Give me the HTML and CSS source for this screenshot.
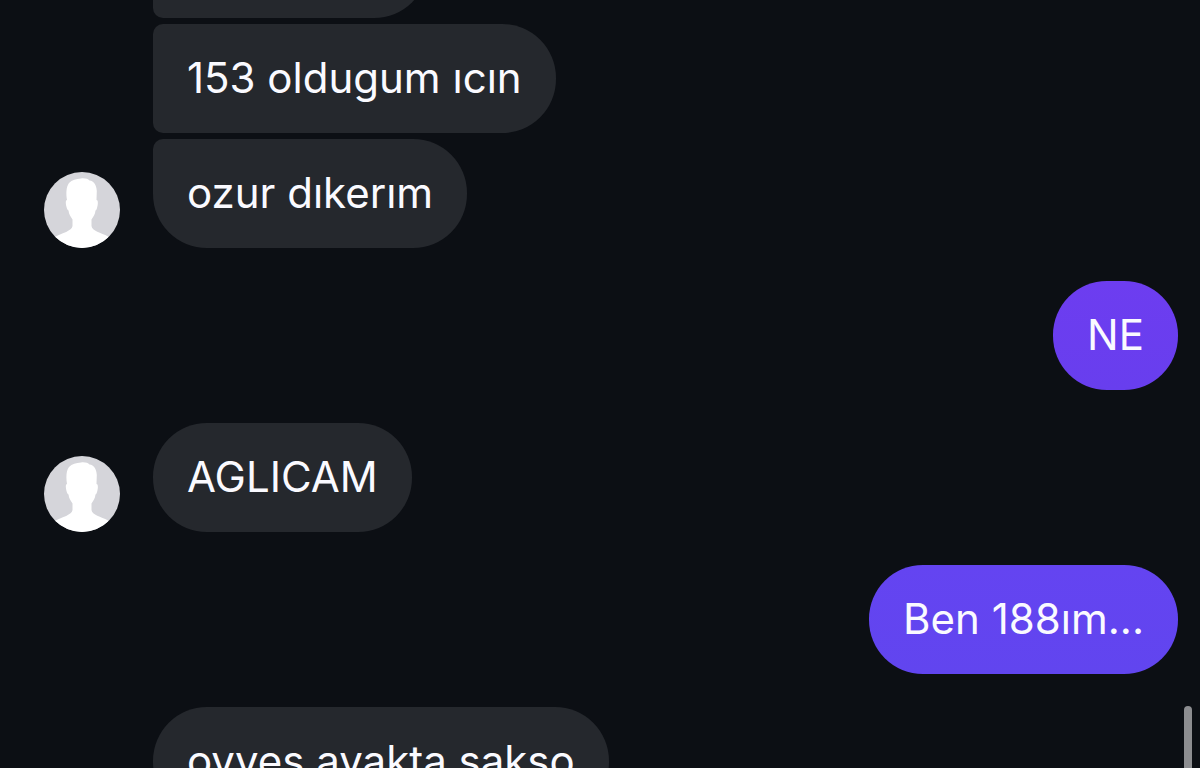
FILE: index.html
```
<!DOCTYPE html>
<html lang="tr">
<head>
<meta charset="utf-8">
<meta name="viewport" content="width=device-width, initial-scale=1">
<title>Chat</title>
<link rel="stylesheet" href="styles.css">
</head>
<body>
<svg class="defs" aria-hidden="true">
  <symbol id="person" viewBox="0 0 76 76">
    <rect width="76" height="76" fill="#d5d5da"/>
    <path fill="#fff" d="M23 28C22 22 22 15 25 11C28 8 32 7 37 6.500C41 6 44 7 45.500 8.500C50 9 52.500 13 52.800 19L52.500 28C54.500 28 54 33 53 36C52.500 38 52 38 51.500 38.500C51 42 50 44 47.500 47.500V54C48 59 57 60.500 64 64.500V76H11V65C18 61 28 59 28.500 54V47.500C26 44 25 42 24.500 38.500C23.500 38 23 37 22.500 35C21.500 31 21.500 28 23 28Z"/>
  </symbol>
</svg>
<main class="chat">
  <section class="group received">
    <div class="avatar"><svg aria-hidden="true"><use href="#person"/></svg></div>
    <div class="stack">
      <p class="bubble first earlier"></p>
      <p class="bubble middle">153 oldugum ıcın</p>
      <p class="bubble last">ozur dıkerım</p>
    </div>
  </section>
  <section class="group sent">
    <p class="bubble violet">NE</p>
  </section>
  <section class="group received">
    <div class="avatar"><svg aria-hidden="true"><use href="#person"/></svg></div>
    <p class="bubble">AGLICAM</p>
  </section>
  <section class="group sent">
    <p class="bubble indigo">Ben 188ım...</p>
  </section>
  <section class="group received">
    <div class="avatar blank"></div>
    <p class="bubble">oyyes ayakta sakso</p>
  </section>
</main>
<div class="scroll-thumb"></div>
</body>
</html>
```
FILE: styles.css
```
* { box-sizing: border-box; }

body {
  margin: 0;
  height: 100vh;
  overflow: hidden;
  background: #0c0f14;
  color: #fafaff;
  font-family: Inter, "Liberation Sans", sans-serif;
  font-size: 42px;
  line-height: 55px;
}

.defs {
  position: absolute;
  width: 0;
  height: 0;
}

/* The thread is scrolled so the oldest bubble is mostly above the window. */
.chat {
  display: flex;
  flex-direction: column;
  gap: 33px;
  margin-top: -91px;
  padding: 0 22px 0 44px;
}

.group {
  display: flex;
  align-items: flex-end;
  gap: 33px;
}

.sent { justify-content: flex-end; }

.stack {
  display: flex;
  flex-direction: column;
  align-items: flex-start;
  gap: 6px;
}

.avatar {
  flex: none;
  width: 76px;
  height: 76px;
  border-radius: 50%;
  overflow: hidden;
}

.avatar svg {
  display: block;
  width: 100%;
  height: 100%;
}

.bubble {
  margin: 0;
  min-height: 109px;
  padding: 26px 34px 28px;
  border-radius: 54px;
  background: #25282d;
  white-space: nowrap;
}

.first { border-bottom-left-radius: 10px; }

.middle {
  border-top-left-radius: 10px;
  border-bottom-left-radius: 10px;
}

.last { border-top-left-radius: 10px; }

.earlier { min-width: 275px; }

.violet { background: linear-gradient(#6d3df0, #683eee); }

.indigo { background: linear-gradient(#6444f1, #6145ef); }

.scroll-thumb {
  position: fixed;
  top: 706px;
  right: 8px;
  bottom: 0;
  width: 8px;
  border-radius: 4px 4px 0 0;
  background: #8c8d90;
}
```
